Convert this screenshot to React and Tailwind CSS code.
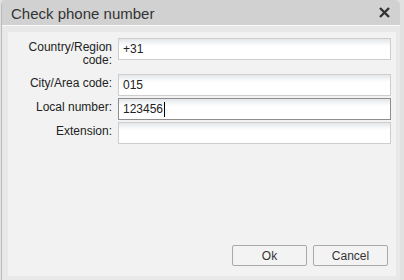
const rows = [
  { label: ["Country/Region", "code:"], value: "+31" },
  { label: ["City/Area code:"], value: "015" },
  { label: ["Local number:"], value: "123456", focused: true },
  { label: ["Extension:"], value: "" },
];

function Field({ value, focused }) {
  return (
    <div
      className={`h-[22px] w-[273px] border ${
        focused ? "border-[#8e8e8e]" : "border-[#cdcdcd]"
      } bg-[linear-gradient(#e3e7eb,#ffffff_7px)] flex items-center pl-[4px] text-[12px] text-[#222]`}
    >
      <span>{value}</span>
      {focused && <span className="ml-[1px] w-px h-[15px] bg-black"></span>}
    </div>
  );
}

export default function App() {
  return (
    <div className="w-[404px] h-[280px] bg-[#e1e1e1] overflow-hidden font-['Liberation_Sans',Arial,sans-serif]">
      <div className="ml-[1px] w-[399px] h-[280px] flex flex-col rounded-t-[5px] overflow-hidden border-l border-[#bcbcbc] bg-[#e8e8e8]">

        {/* Title bar */}
        <div className="h-[26px] shrink-0 bg-[#d1d1d1] border-b border-[#fafafa] flex items-center justify-between pl-[9px] pr-[10px]">
          <span className="text-[15px] text-[#333] leading-none pt-[1px]">Check phone number</span>
          <svg width="11" height="11" viewBox="0 0 11 11" className="mt-[-1px]">
            <path d="M1 1L10 10M10 1L1 10" stroke="#333" strokeWidth="2.4" strokeLinecap="butt" />
          </svg>
        </div>

        {/* Body */}
        <div className="flex-1 pl-[6px] pr-[4px] pt-[6px] pb-[4px]">
          <div className="h-full bg-[#f2f2f2] flex flex-col pt-[6px]">
            <div className="grid grid-cols-[104px_273px] gap-x-[6px] gap-y-[2px] grid-rows-[34px_22px_22px_22px]">
              {rows.map((r, i) => (
                <div key={i} className="contents">
                  <div className="text-right text-[12px] leading-[13px] pt-[3px] text-[#222]">
                    {r.label.map((l, j) => (
                      <div key={j}>{l}</div>
                    ))}
                  </div>
                  <Field value={r.value} focused={r.focused} />
                </div>
              ))}
            </div>

            <div className="mt-auto flex justify-end gap-[6px] pr-[8px] pb-[10px]">
              <button className="w-[75px] h-[21px] border border-[#a9a9a9] rounded-[2px] bg-[#f3f3f3] text-[12px] text-[#333]">
                Ok
              </button>
              <button className="w-[75px] h-[21px] border border-[#a9a9a9] rounded-[2px] bg-[#f3f3f3] text-[12px] text-[#333]">
                Cancel
              </button>
            </div>
          </div>
        </div>
      </div>
    </div>
  );
}
